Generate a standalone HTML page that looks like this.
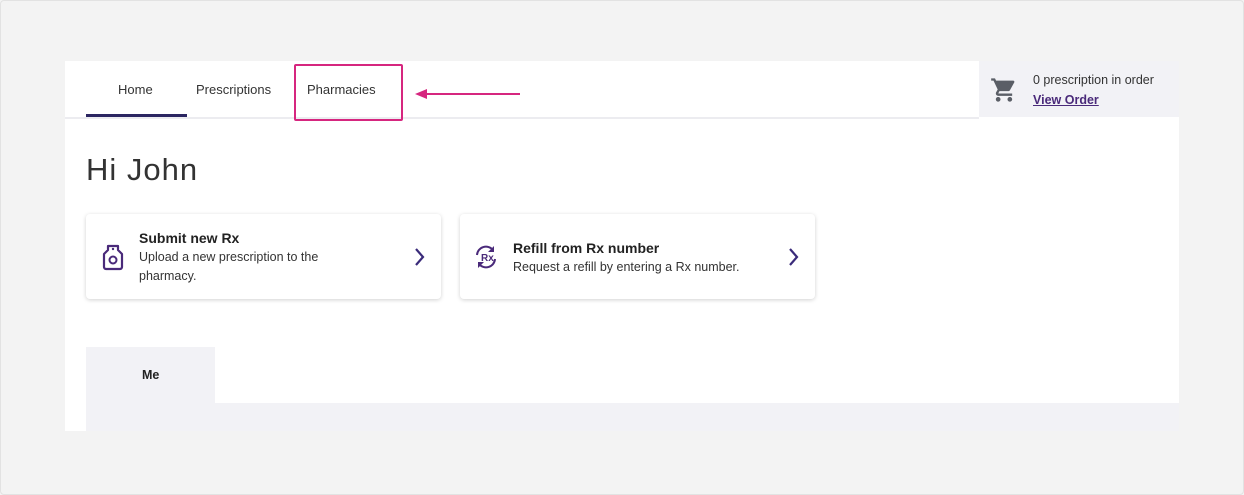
<!DOCTYPE html>
<html><head><meta charset="utf-8"><style>
*{margin:0;padding:0;box-sizing:border-box}
body{width:1244px;height:495px;background:#f3f3f3;font-family:"Liberation Sans",sans-serif;position:relative;overflow:hidden}
.abs{position:absolute}
.panel{left:65px;top:61px;width:1114px;height:370px;background:#fff}
.nav{font-size:13px;color:#333;top:82px;font-weight:500}
.card{background:#fff;border-radius:4px;box-shadow:0 1px 4px rgba(0,0,0,.18);}
.t{font-weight:bold;font-size:14px;color:#222}
.d{font-size:12.5px;color:#333;line-height:19px}
</style></head><body>
<div class="abs" style="left:0;top:0;width:1244px;height:495px;border:1px solid #e2e2e2;border-radius:4px"></div>
<div class="abs panel"></div>
<div class="abs" style="left:65px;top:117px;width:914px;height:2px;background:#ececf0"></div>
<div class="abs nav" style="left:118px">Home</div>
<div class="abs nav" style="left:196px">Prescriptions</div>
<div class="abs nav" style="left:307px">Pharmacies</div>
<div class="abs" style="left:86px;top:114px;width:101px;height:3px;background:#2b2561"></div>
<div class="abs" style="left:294px;top:64px;width:109px;height:57px;border:2px solid #d6267f;border-radius:2px"></div>
<div class="abs" style="left:425px;top:93px;width:95px;height:2px;background:#d6267f"></div>
<div class="abs" style="left:415px;top:89px;width:0;height:0;border-top:5px solid transparent;border-bottom:5px solid transparent;border-right:12px solid #d6267f"></div>
<div class="abs" style="left:979px;top:61px;width:200px;height:56px;background:#f2f2f6"></div>
<svg class="abs" style="left:990px;top:76px" width="28" height="28" viewBox="0 0 24 24"><path fill="#5a5e66" d="M7 18c-1.1 0-2 .9-2 2s.9 2 2 2 2-.9 2-2-.9-2-2-2zM1 2v2h2l3.6 7.6-1.4 2.4c-.1.3-.2.6-.2 1 0 1.1.9 2 2 2h12v-2H7.4c-.1 0-.2-.1-.2-.2v-.1l.9-1.7h7.4c.8 0 1.4-.4 1.7-1l3.6-6.5c.1-.2.1-.3.1-.5 0-.6-.4-1-1-1H5.2l-.9-2H1zm16 16c-1.1 0-2 .9-2 2s.9 2 2 2 2-.9 2-2-.9-2-2-2z"/></svg>
<div class="abs" style="left:1033px;top:73px;font-size:12.5px;color:#333">0 prescription in order</div>
<div class="abs" style="left:1033px;top:93px;font-size:12.5px;color:#4a2a7a;font-weight:bold;text-decoration:underline">View Order</div>
<div class="abs" style="left:86px;top:152px;font-size:31px;color:#333;letter-spacing:1px">Hi John</div>
<div class="abs card" style="left:86px;top:214px;width:355px;height:85px"></div>
<div class="abs card" style="left:460px;top:214px;width:355px;height:85px"></div>
<svg class="abs" style="left:100px;top:243px" width="26" height="28" viewBox="0 0 26 28"><path fill="none" stroke="#4a2a7a" stroke-width="2.2" stroke-linejoin="round" d="M8 3h10v4l4 4v13a2 2 0 0 1-2 2H6a2 2 0 0 1-2-2V11l4-4z"/><circle cx="13" cy="17" r="3.5" fill="none" stroke="#4a2a7a" stroke-width="2"/><circle cx="13" cy="6" r="1.2" fill="#4a2a7a"/></svg>
<div class="abs t" style="left:139px;top:230px">Submit new Rx</div>
<div class="abs d" style="left:139px;top:248px">Upload a new prescription to the<br>pharmacy.</div>
<svg class="abs" style="left:414px;top:247px" width="12" height="20"><path d="M2 2l7 8-7 8" fill="none" stroke="#3a2b7a" stroke-width="2.2"/></svg>
<svg class="abs" style="left:472px;top:243px" width="28" height="28" viewBox="0 0 28 28"><path fill="none" stroke="#4a2a7a" stroke-width="2" d="M5 12a9 9 0 0 1 16-5M23 16a9 9 0 0 1-16 5"/><path fill="#4a2a7a" d="M22 3v6h-6zM6 25v-6h6z"/><text x="9" y="18" font-size="10" font-weight="bold" fill="#4a2a7a" font-family="Liberation Sans">Rx</text></svg>
<div class="abs t" style="left:513px;top:240px">Refill from Rx number</div>
<div class="abs d" style="left:513px;top:258px">Request a refill by entering a Rx number.</div>
<svg class="abs" style="left:788px;top:247px" width="12" height="20"><path d="M2 2l7 8-7 8" fill="none" stroke="#3a2b7a" stroke-width="2.2"/></svg>
<div class="abs" style="left:86px;top:347px;width:129px;height:84px;background:#f2f2f6"></div>
<div class="abs" style="left:86px;top:403px;width:1093px;height:28px;background:#f2f2f6"></div>
<div class="abs" style="left:142px;top:368px;font-size:12.5px;font-weight:bold;color:#222">Me</div>
</body></html>
